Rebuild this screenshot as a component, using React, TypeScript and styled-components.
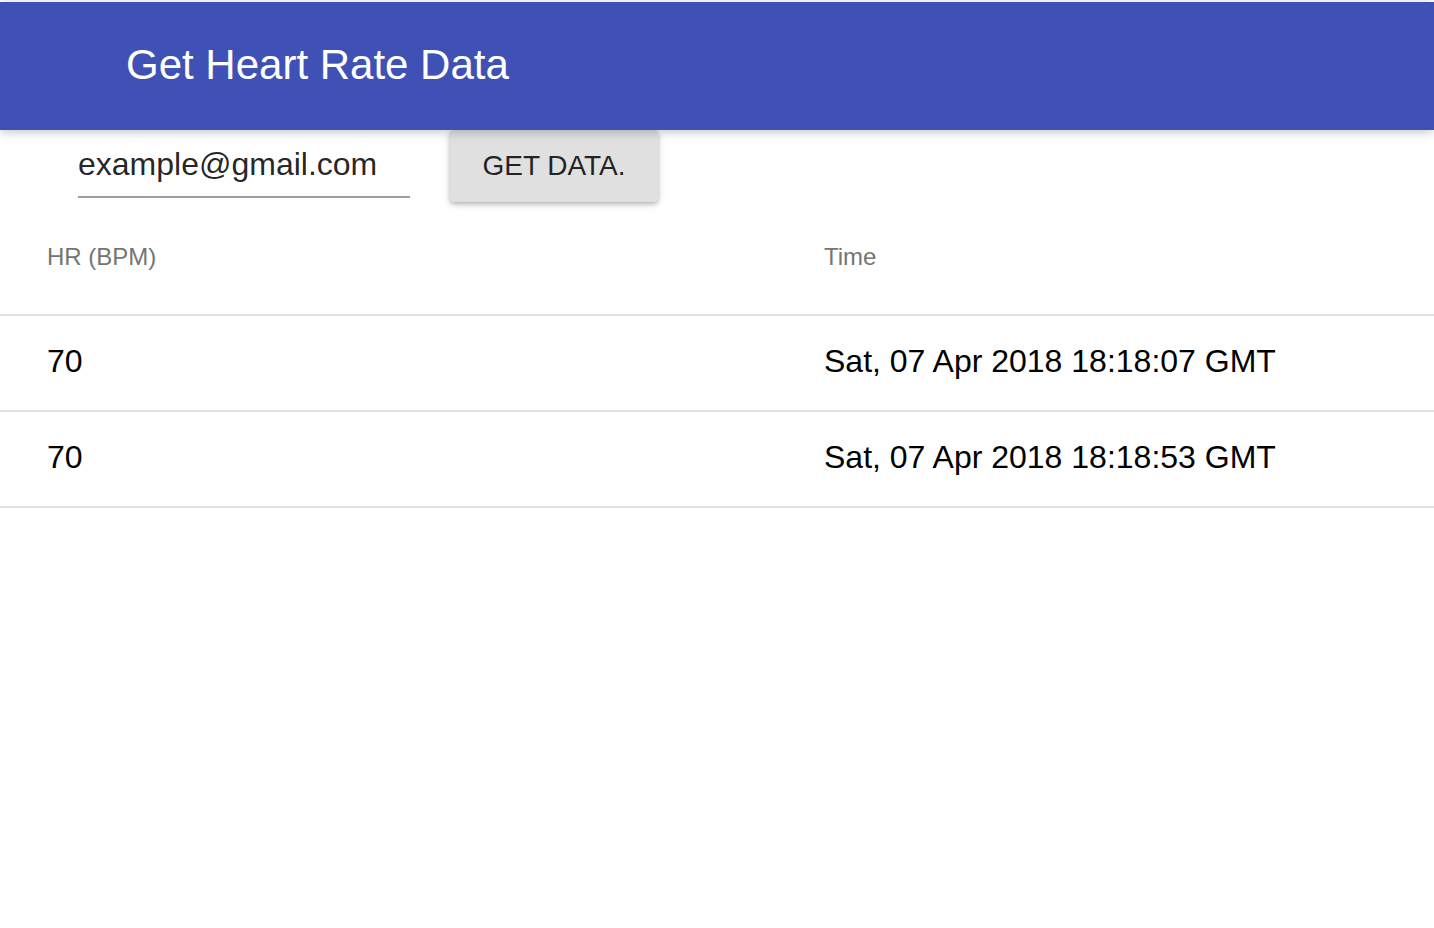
import React from "react";
import styled, { createGlobalStyle } from "styled-components";

const GlobalStyle = createGlobalStyle`
  html, body {
    margin: 0;
    padding: 0;
    background: #ffffff;
    font-family: "Liberation Sans", Arial, Helvetica, sans-serif;
  }
  * { box-sizing: border-box; }
`;

const Page = styled.div`
  padding-top: 2px;
  min-height: 926px;
  background: #ffffff;
`;

const AppBar = styled.header`
  position: relative;
  z-index: 2;
  height: 128px;
  background: #3f51b5;
  display: flex;
  align-items: center;
  padding: 0 0 2px 126px;
  box-shadow: rgba(0, 0, 0, 0.12) 0 2px 12px, rgba(0, 0, 0, 0.12) 0 2px 8px;
`;

const Title = styled.h1`
  margin: 0;
  color: #ffffff;
  font-size: 42px;
  font-weight: 400;
  line-height: 1;
  letter-spacing: 0;
`;

const FormRow = styled.div`
  display: flex;
  align-items: flex-start;
  gap: 40px;
  padding-left: 78px;
  height: 72px;
`;

const Field = styled.div`
  width: 332px;
  padding-top: 14px;
  border-bottom: 2px solid #9e9e9e;
`;

const Input = styled.input`
  display: block;
  width: 100%;
  height: 40px;
  margin-bottom: 12px;
  padding: 0;
  border: none;
  outline: none;
  background: transparent;
  font-family: inherit;
  font-size: 32px;
  line-height: 40px;
  color: rgba(0, 0, 0, 0.87);
`;

const Button = styled.button`
  position: relative;
  z-index: 1;
  width: 208px;
  height: 72px;
  border: none;
  border-radius: 4px;
  background: #e0e0e0;
  color: rgba(0, 0, 0, 0.87);
  font-family: inherit;
  font-size: 28px;
  line-height: 72px;
  padding: 0;
  cursor: pointer;
  box-shadow: rgba(0, 0, 0, 0.12) 0 2px 10px, rgba(0, 0, 0, 0.22) 0 2px 4px;
`;

const Table = styled.div`
  width: 100%;
`;

const Row = styled.div<{ $head?: boolean }>`
  display: grid;
  grid-template-columns: 777px 1fr;
  align-items: center;
  height: ${(p) => (p.$head ? "114px" : "96px")};
  border-bottom: 2px solid #e0e0e0;
  padding-bottom: ${(p) => (p.$head ? "2px" : "3px")};
`;

const HeadCell = styled.div`
  padding-left: 47px;
  font-size: 24px;
  color: #757575;
`;

const Cell = styled.div`
  padding-left: 47px;
  font-size: 32px;
  color: #000000;
`;

const data = [
  { hr: 70, time: "Sat, 07 Apr 2018 18:18:07 GMT" },
  { hr: 70, time: "Sat, 07 Apr 2018 18:18:53 GMT" },
];

export default function App() {
  return (
    <>
      <GlobalStyle />
      <Page>
        <AppBar>
          <Title>Get Heart Rate Data</Title>
        </AppBar>
        <FormRow>
          <Field>
            <Input defaultValue="example@gmail.com" />
          </Field>
          <Button>GET DATA.</Button>
        </FormRow>
        <Table>
          <Row $head>
            <HeadCell>HR (BPM)</HeadCell>
            <HeadCell>Time</HeadCell>
          </Row>
          {data.map((d, i) => (
            <Row key={i}>
              <Cell>{d.hr}</Cell>
              <Cell>{d.time}</Cell>
            </Row>
          ))}
        </Table>
      </Page>
    </>
  );
}
